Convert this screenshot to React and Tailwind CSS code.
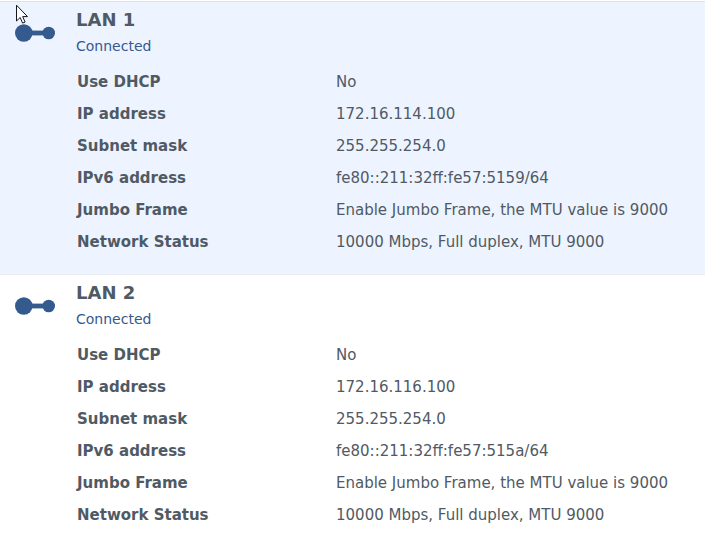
const interfaces = [
  {
    name: 'LAN 1',
    selected: true,
    details: [
      ['Use DHCP', 'No'],
      ['IP address', '172.16.114.100'],
      ['Subnet mask', '255.255.254.0'],
      ['IPv6 address', 'fe80::211:32ff:fe57:5159/64'],
      ['Jumbo Frame', 'Enable Jumbo Frame, the MTU value is 9000'],
      ['Network Status', '10000 Mbps, Full duplex, MTU 9000'],
    ],
  },
  {
    name: 'LAN 2',
    selected: false,
    details: [
      ['Use DHCP', 'No'],
      ['IP address', '172.16.116.100'],
      ['Subnet mask', '255.255.254.0'],
      ['IPv6 address', 'fe80::211:32ff:fe57:515a/64'],
      ['Jumbo Frame', 'Enable Jumbo Frame, the MTU value is 9000'],
      ['Network Status', '10000 Mbps, Full duplex, MTU 9000'],
    ],
  },
];

function LinkIcon() {
  return (
    <svg className="mt-[21px] h-5 w-10 shrink-0" viewBox="0 0 40 20" fill="#345a8e" aria-hidden="true">
      <circle cx="8.8" cy="10" r="8.8" />
      <rect x="15" y="7.6" width="15" height="4.8" />
      <circle cx="33.7" cy="10" r="6.3" />
    </svg>
  );
}

function Pointer() {
  return (
    <svg className="pointer-events-none absolute top-1 left-4 h-5 w-3" viewBox="0 0 12 20" aria-hidden="true">
      <path
        d="M.5 1.2V17l3.7-3.5 2.4 5.6 2.5-1-2.4-5.5h4.8Z"
        fill="#fff"
        stroke="#15171c"
        strokeWidth="1"
      />
    </svg>
  );
}

function NetworkInterface({ name, selected, details }) {
  return (
    <section
      className={
        selected
          ? 'flex gap-[21px] border-t border-[#dce2ea] bg-[#edf4ff] px-[15px] pb-4'
          : 'flex gap-[21px] border-t border-[#e9edf2] bg-white px-[15px] pb-4'
      }
    >
      <LinkIcon />
      <div className="min-w-0 flex-1 pt-1">
        <h2 className="text-lg font-bold">{name}</h2>
        <p className="text-sm leading-6 text-[#35598f]">Connected</p>
        <table className="mt-2 w-full text-[15px]">
          <tbody>
            {details.map(([label, value]) => (
              <tr key={label} className="h-8">
                <th scope="row" className="w-[260px] p-0 pl-px text-left font-bold">
                  {label}
                </th>
                <td className="p-0">{value}</td>
              </tr>
            ))}
          </tbody>
        </table>
      </div>
    </section>
  );
}

export default function App() {
  return (
    <main className="relative min-h-screen bg-white pt-px font-[Verdana,'DejaVu_Sans',sans-serif] text-[#505a64]">
      {interfaces.map((item) => (
        <NetworkInterface key={item.name} {...item} />
      ))}
      <Pointer />
    </main>
  );
}
